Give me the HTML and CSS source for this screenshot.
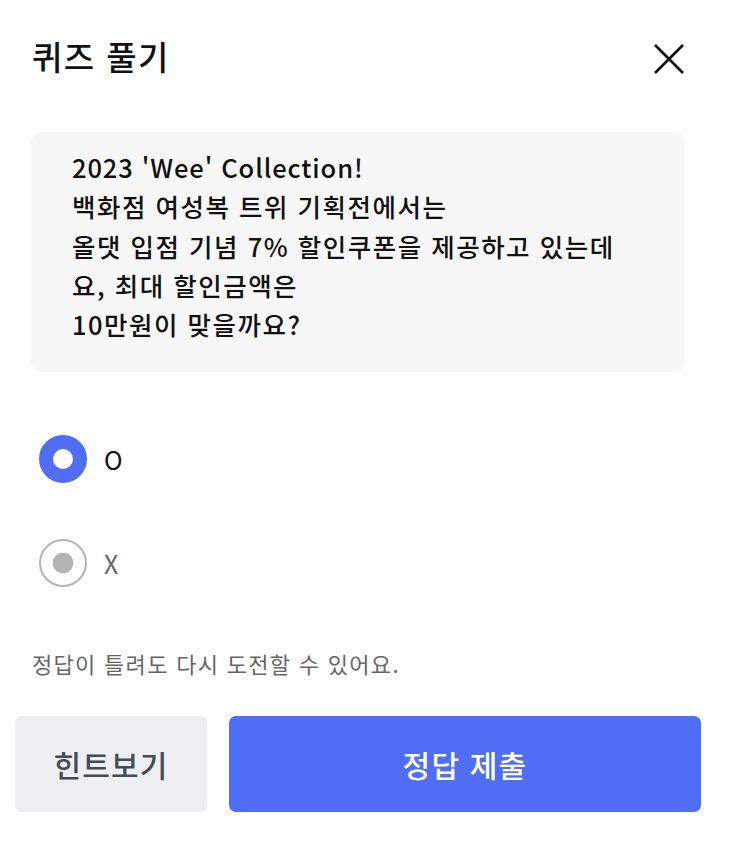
FILE: index.html
```html
<!DOCTYPE html>
<html lang="ko">
<head>
<meta charset="utf-8">
<link rel="stylesheet" href="styles.css">
</head>
<body>
<div class="sheet">
  <header class="head">
    <h1 class="title">퀴즈 풀기</h1>
    <button class="close" aria-label="닫기">
      <svg width="32" height="32" viewBox="0 0 32 32"><path d="M2 2 L30 30 M30 2 L2 30" stroke="#111" stroke-width="2.6" fill="none"/></svg>
    </button>
  </header>
  <div class="question">
    <p><span class="latin">2023 'Wee' Collection!</span><br>백화점 여성복 트위 기획전에서는<br>올댓 입점 기념 7% 할인쿠폰을 제공하고 있는데요, 최대 할인금액은<br>10만원이 맞을까요?</p>
  </div>
  <div class="options">
    <label class="opt"><span class="radio on"></span><span class="opt-label">O</span></label>
    <label class="opt"><span class="radio off"></span><span class="opt-label muted">X</span></label>
  </div>
  <p class="help">정답이 틀려도 다시 도전할 수 있어요.</p>
  <div class="actions">
    <button class="btn hint">힌트보기</button>
    <button class="btn submit">정답 제출</button>
  </div>
</div>
</body>
</html>
```
FILE: styles.css
```css
* { box-sizing: border-box; }
html, body { margin: 0; padding: 0; background: #fff; }
body { font-family: "Noto Sans CJK KR", "Noto Sans", sans-serif; color: #111; }
.sheet { width: 730px; padding: 0 29px 0 15px; }
.head { display: flex; justify-content: space-between; align-items: center; padding: 30px 16px 0 17px; height: 82px; }
.title { margin: 0; font-size: 33px; font-weight: 500; line-height: 44px; color: #111; letter-spacing: 1.4px; }
.close { border: 0; background: none; padding: 0; width: 32px; height: 32px; display: flex; margin-top: 6px; }
.question { margin: 50px 0 0 16px; width: 654px; background: #f7f7f7; border-radius: 12px; padding: 15px 58px 29px 41px; }
.question p { margin: 0; font-size: 25.5px; line-height: 39.25px; font-weight: 500; letter-spacing: 1.5px; }
.question .latin { letter-spacing: 0.9px; }
.options { margin-top: 63px; padding-left: 24px; display: flex; flex-direction: column; gap: 56px; }
.opt { display: flex; align-items: center; gap: 17px; height: 48px; }
.radio { width: 48px; height: 48px; border-radius: 50%; display: block; flex: none; }
.radio.on { border: 14px solid #506ef5; background: #fff; }
.radio.off { border: 2px solid #b3b3b3; background: radial-gradient(circle, #b3b3b3 0 10px, #fff 10.5px); }
.opt-label { font-size: 25px; line-height: 30px; color: #111; }
.opt-label.muted { color: #666; }
.help { margin: 62px 0 0 17px; font-size: 22px; line-height: 28px; color: #666; letter-spacing: 1.3px; }
.actions { margin-top: 39px; display: flex; gap: 22px; }
.btn { border: 0; height: 96px; border-radius: 7px; font-family: inherit; font-size: 30px; font-weight: 500; letter-spacing: 1.2px; }
.hint { width: 192px; background: #eeeff3; color: #444b57; }
.submit { flex: 1; background: #506ef5; color: #fff; }
```
